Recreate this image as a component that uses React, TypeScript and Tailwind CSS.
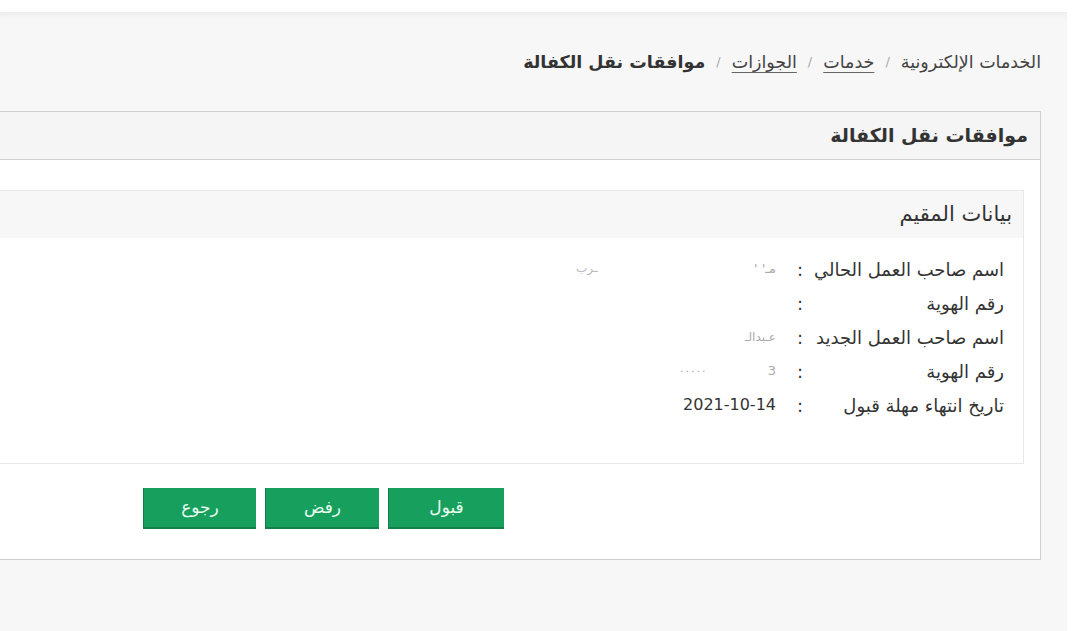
import React from "react";

const font = { fontFamily: '"DejaVu Sans", "Noto Sans", sans-serif' };

interface Row {
  label: string;
  value: React.ReactNode;
}

const rows: Row[] = [
  {
    label: "اسم صاحب العمل الحالي",
    value: (
      <span className="flex w-[200px] justify-between text-[#aaa]">
        <span className="text-[13px]">مـ' '</span>
        <span className="text-[12px] text-[#bbb]">ـرب</span>
      </span>
    ),
  },
  { label: "رقم الهوية", value: null },
  {
    label: "اسم صاحب العمل الجديد",
    value: <span className="text-[12px] text-[#aaa]">عـبدالـ</span>,
  },
  {
    label: "رقم الهوية",
    value: (
      <span className="flex w-[96px] justify-between text-[#aaa]">
        <span className="text-[13px]">3</span>
        <span className="text-[11px] tracking-[2px]">.....</span>
      </span>
    ),
  },
  { label: "تاريخ انتهاء مهلة قبول", value: <span className="text-[16px] text-[#333]">2021-10-14</span> },
];

function Breadcrumb() {
  return (
    <nav className="flex items-center h-[24px] text-[17.5px] text-[#444] gap-[11px]">
      <span>الخدمات الإلكترونية</span>
      <span className="text-[#aaa] text-[13px]">/</span>
      <a className="underline underline-offset-4 decoration-[#666]">خدمات</a>
      <span className="text-[#aaa] text-[13px]">/</span>
      <a className="underline underline-offset-4 decoration-[#666]">الجوازات</a>
      <span className="text-[#aaa] text-[13px]">/</span>
      <span className="font-bold text-[#333]">موافقات نقل الكفالة</span>
    </nav>
  );
}

export default function App() {
  return (
    <div dir="rtl" className="min-h-screen bg-white overflow-hidden" style={font}>
      <div className="mt-[12px] mr-[8px] w-[1067px] min-h-[619px] bg-[#f7f7f7] overflow-hidden pr-[26px] pt-[38px] shadow-[inset_0_6px_6px_-4px_rgba(0,0,0,0.06)]">
        <Breadcrumb />

        <div className="mt-[37px] ml-[-20px] border border-[#cfcfcf] bg-white">
          <div className="h-[48px] flex items-center bg-[#f5f5f5] border-b border-[#cfcfcf] pr-[12px]">
            <h1 className="text-[19px] font-bold text-[#333]">موافقات نقل الكفالة</h1>
          </div>

          <div className="pt-[30px] pr-[16px] pb-[30px]">
            <div className="border border-[#e8e8e8]">
              <div className="h-[47px] flex items-center bg-[#f7f7f7] pr-[11px]">
                <h2 className="text-[21px] text-[#333]">بيانات المقيم</h2>
              </div>
              <div className="pt-[14px] pb-[41px] pr-[19px]">
                {rows.map((row, i) => (
                  <div key={i} className="flex items-center h-[34px] text-[18px] text-[#333]">
                    <span className="w-[196px] whitespace-nowrap">{row.label}</span>
                    <span className="w-[16px] text-center">:</span>
                    <span className="mr-[16px] flex items-center">{row.value}</span>
                  </div>
                ))}
              </div>
            </div>

            <div className="mt-[24px] mr-[520px] flex gap-[9px]">
              <button className="w-[116px] h-[41px] bg-[#17a05d] border-b-2 border-l border-[#137f4b] text-[#eafff2] text-[17px]">
                قبول
              </button>
              <button className="w-[114px] h-[41px] bg-[#17a05d] border-b-2 border-l border-[#137f4b] text-[#eafff2] text-[17px]">
                رفض
              </button>
              <button className="w-[113px] h-[41px] bg-[#17a05d] border-b-2 border-l border-[#137f4b] text-[#eafff2] text-[17px]">
                رجوع
              </button>
            </div>
          </div>
        </div>
      </div>
    </div>
  );
}
